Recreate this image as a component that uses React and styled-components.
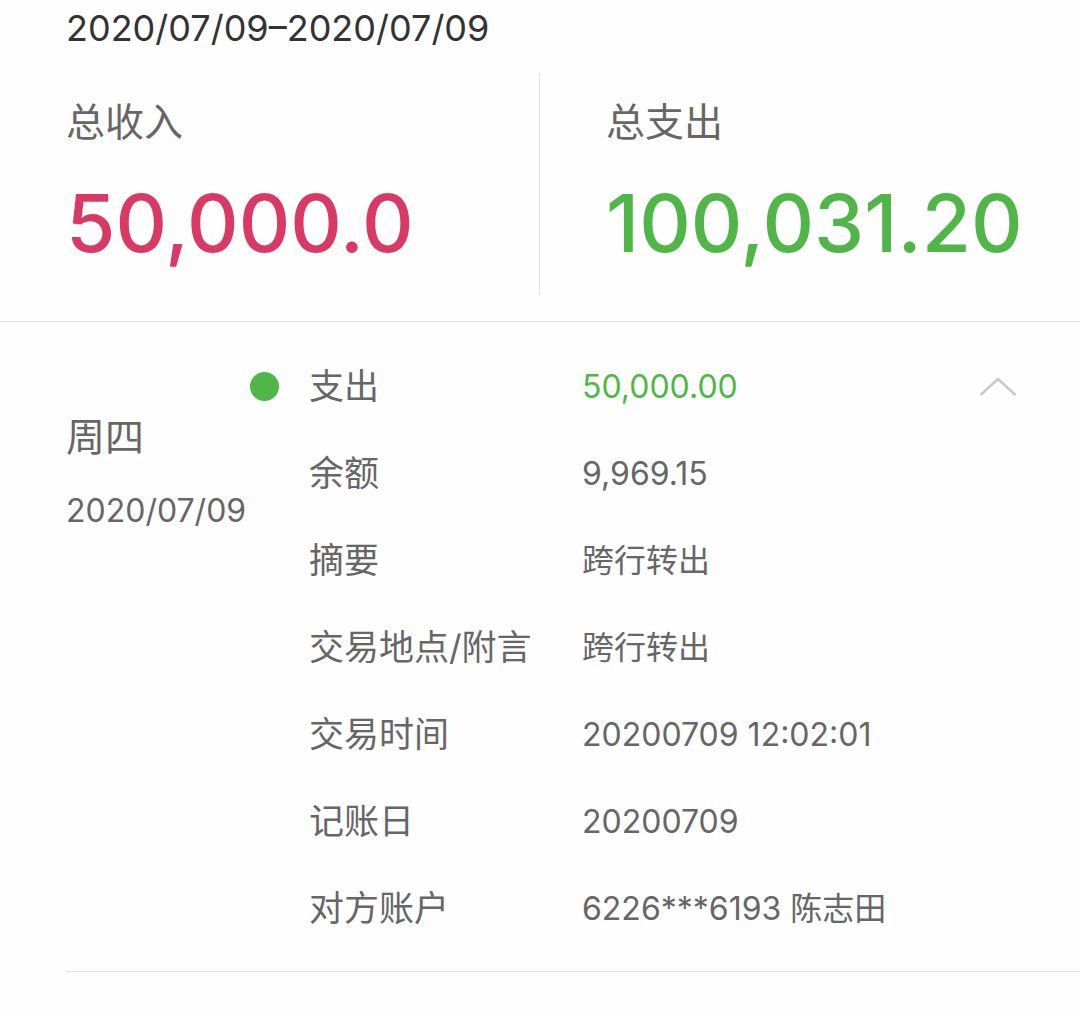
import React, { useState } from "react";
import styled, { createGlobalStyle } from "styled-components";

const GlobalStyle = createGlobalStyle`
  * { box-sizing: border-box; }
  body {
    margin: 0;
    background: #fefefe;
    color: #666;
    font-family: Inter, "Noto Sans CJK SC", sans-serif;
    font-size: 32px;
    line-height: 56px;
  }
`;

const GREEN = "#50b648";
const RED = "#d83a64";
const LINE = "#e0e0e0";

const Range = styled.h1`
  margin: 0;
  padding-left: 66px;
  color: #333;
  font-size: 36px;
  font-weight: 400;
  line-height: 56px;
`;

const Summary = styled.section`
  display: grid;
  grid-template-columns: 1fr 1fr;
  padding: 17px 0 26px;
  border-bottom: 1px solid ${LINE};
`;

const Total = styled.div`
  padding: 21px 0 22px 66px;
  &:first-child {
    border-right: 1px solid ${LINE};
  }
`;

const TotalLabel = styled.div`
  font-size: 39px;
`;

const Amount = styled.div`
  margin-top: 23px;
  color: ${(p) => p.$color};
  font-size: 80px;
  font-weight: 500;
  line-height: 100px;
`;

const Entry = styled.article`
  display: flex;
  align-items: flex-start;
  margin-left: 66px;
  padding: 21px 64px 19px 0;
  border-bottom: 1px solid ${LINE};
`;

const Day = styled.div`
  flex: 0 0 184px;
  padding-top: 66px;
  white-space: nowrap;
`;

const Weekday = styled.div`
  font-size: 39px;
`;

const DayDate = styled.time`
  display: block;
  margin-top: 18px;
`;

const Marker = styled.div`
  flex: 0 0 59px;
  display: flex;
  align-items: center;
  height: 87px;
  &::before {
    content: "";
    width: 29px;
    height: 29px;
    border-radius: 50%;
    background: ${GREEN};
  }
`;

const Details = styled.dl`
  flex: 1;
  margin: 0;
`;

const Row = styled.div`
  display: grid;
  grid-template-columns: 273px 1fr;
  line-height: 87px;
`;

const Term = styled.dt`
  font-size: 35px;
`;

const Value = styled.dd`
  margin: 0;
  color: ${(p) => (p.$accent ? GREEN : "inherit")};
  white-space: nowrap;
`;

const Toggle = styled.button`
  display: flex;
  align-items: center;
  height: 87px;
  padding: 0;
  border: 0;
  background: none;
  cursor: pointer;
  svg {
    transform: ${(p) => (p.$open ? "none" : "rotate(180deg)")};
  }
`;

const rows = [
  ["支出", "50,000.00"],
  ["余额", "9,969.15"],
  ["摘要", "跨行转出"],
  ["交易地点/附言", "跨行转出"],
  ["交易时间", "20200709 12:02:01"],
  ["记账日", "20200709"],
  ["对方账户", "6226***6193 陈志田"],
];

export default function App() {
  const [open, setOpen] = useState(true);
  const shown = open ? rows : rows.slice(0, 2);
  return (
    <main>
      <GlobalStyle />
      <Range>2020/07/09–2020/07/09</Range>
      <Summary>
        <Total>
          <TotalLabel>总收入</TotalLabel>
          <Amount $color={RED}>50,000.0</Amount>
        </Total>
        <Total>
          <TotalLabel>总支出</TotalLabel>
          <Amount $color={GREEN}>100,031.20</Amount>
        </Total>
      </Summary>
      <Entry>
        <Day>
          <Weekday>周四</Weekday>
          <DayDate dateTime="2020-07-09">2020/07/09</DayDate>
        </Day>
        <Marker />
        <Details>
          {shown.map(([term, value], i) => (
            <Row key={term}>
              <Term>{term}</Term>
              <Value $accent={i === 0}>{value}</Value>
            </Row>
          ))}
        </Details>
        <Toggle
          type="button"
          $open={open}
          aria-expanded={open}
          aria-label="明细"
          onClick={() => setOpen(!open)}
        >
          <svg width="36" height="20" viewBox="0 0 36 20" fill="none">
            <path d="M0.5 18 18 2 35.5 18" stroke="#c8c8c8" strokeWidth="2.4" />
          </svg>
        </Toggle>
      </Entry>
    </main>
  );
}
